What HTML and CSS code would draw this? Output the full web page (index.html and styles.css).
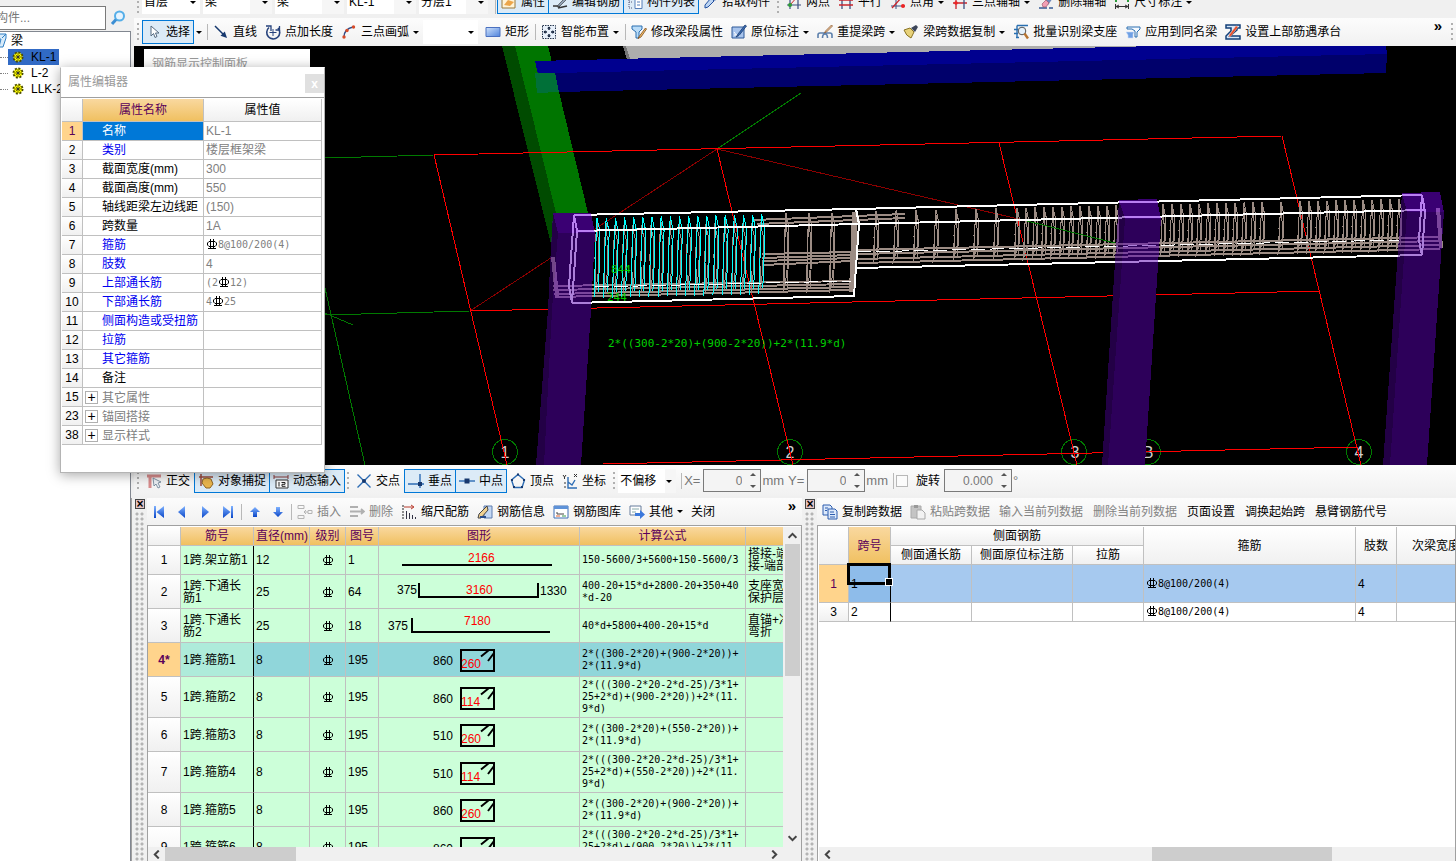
FILE: index.html
```html
<!DOCTYPE html>
<html lang="zh-CN">
<head>
    <meta charset="UTF-8">
    <meta name="viewport" content="width=device-width, initial-scale=1.0">
    <title>梁钢筋编辑</title>
    <link rel="stylesheet" href="styles.css">
</head>
<body>
    <!-- icon sprite -->
    <svg class="sprite" aria-hidden="true">
        <defs>
            <linearGradient id="blue" x1="0" y1="0" x2="1" y2="1"><stop offset="0" stop-color="#cfe2fb"/><stop offset="1" stop-color="#4f83dc"/></linearGradient>
            <linearGradient id="nav" x1="0" y1="0" x2="0" y2="1"><stop offset="0" stop-color="#7fb2ff"/><stop offset="1" stop-color="#0a46c8"/></linearGradient>
        </defs>
        <symbol id="i-search" viewBox="0 0 16 16"><circle cx="9.500" cy="6" r="4.500" fill="#e6f4ff" stroke="#55aee8" stroke-width="2"/><path d="M6 9.500 2 14" stroke="#3c8fd4" stroke-width="3"/></symbol>
        <symbol id="i-gear" viewBox="0 0 12 12"><circle cx="6" cy="6" r="4.500" fill="#ff0" stroke="#4a4a00" stroke-width="2" stroke-dasharray="2 1.500"/><circle cx="6" cy="6" r="3.500" fill="#ff0"/><path d="M6 2v8M2 6h8M3.500 3.500l5 5M8.500 3.500l-5 5" stroke="#555500" stroke-width=".8"/><circle cx="6" cy="6" r="1.300" fill="#333"/></symbol>
        <symbol id="i-beam" viewBox="0 0 16 16"><path d="M1 4 5 1h10v4l-3 9H8l2-8H1z" fill="#d8ebfa" stroke="#2f7fc4"/><path d="M11 5 15 1" stroke="#2f7fc4"/></symbol>
        <symbol id="i-cursor" viewBox="0 0 16 16"><path d="M5 2v10l2.500-2.500L9 13.500l2-1L9.500 9H13z" fill="#fff" stroke="#556a80"/></symbol>
        <symbol id="i-line" viewBox="0 0 16 16"><path d="M2 2 12 12" stroke="#16386e" stroke-width="1.500"/><path d="M14 14 7.500 11.800 11.800 7.500z" fill="#16386e"/></symbol>
        <symbol id="i-arclen" viewBox="0 0 16 16"><path d="M4 3.500A6.500 6.500 0 1 0 13 4" fill="none" stroke="#26427c" stroke-width="1.600"/><path d="M1 2h5v5M14.500 2v4h-4" fill="none" stroke="#26427c" stroke-width="1.300"/><path d="M8 5v7M4.500 8.500h7" stroke="#26427c"/></symbol>
        <symbol id="i-arc" viewBox="0 0 16 16"><path d="M3 13Q3 5 12 3" fill="none" stroke="#334d86" stroke-width="1.400"/><circle cx="3" cy="13" r="1.700" fill="#d64b2a"/><circle cx="6" cy="6.500" r="1.700" fill="#d64b2a"/><circle cx="12.500" cy="3" r="1.700" fill="#d64b2a"/></symbol>
        <symbol id="i-rect" viewBox="0 0 16 16"><path d="M1 3.500h14v9H1z" fill="url(#blue)" stroke="#4a70c0"/></symbol>
        <symbol id="i-smart" viewBox="0 0 16 16"><path d="M1.500 1.500h13v13h-13z" fill="#e8f0fa" stroke="#26364e" stroke-dasharray="1.500 1"/><path d="M8 3v3M8 10v3M3 8h3M10 8h3" stroke="#14233c" stroke-width="1.500"/><path d="M6 4.500h4L8 2.500zM6 11.500h4l-2 2zM4.500 6v4l-2-2zM11.500 6v4l2-2z" fill="#14233c"/></symbol>
        <symbol id="i-edit" viewBox="0 0 16 16"><path d="M1 2h10v3l-3 3v6H5V8L1 5z" fill="#b9dcf8" stroke="#2a6fb0"/><path d="m14.500 4-6 8-1.500 2.500L10 13l5.500-8z" fill="#f5c26a" stroke="#7a4818" stroke-width=".8"/></symbol>
        <symbol id="i-mark" viewBox="0 0 16 16"><path d="M1 3h12v11H1z" fill="#a8c4ec" stroke="#2c5898"/><path d="M3 8l3 4 3-4M3 11h6" stroke="#fff" fill="none"/><path d="M14 1 7 10 5 13l3-1.500L15.500 2z" fill="#3a6cb4" stroke="#1c3c70" stroke-width=".8"/></symbol>
        <symbol id="i-span" viewBox="0 0 16 16"><path d="M1 14v-3q0-2 2-2h10q2 0 2 2v3M5.500 14q0-4 2.500-4t2.500 4" fill="none" stroke="#5d80ac" stroke-width="1.600"/><path d="m14.500 1-6 6-1 2 2-1 6-6z" fill="#f0c9a0" stroke="#8a5a34" stroke-width=".8"/></symbol>
        <symbol id="i-brush" viewBox="0 0 16 16"><path d="M1 6 7 4l4 4-3 6Q3 12 1 6z" fill="#e8d27a" stroke="#8a7424"/><path d="M8 4 13 1l2 2-3 5z" fill="#3d465a"/></symbol>
        <symbol id="i-find" viewBox="0 0 16 16"><path d="M4 1.500h11M4 1.500V5M1 5.500h4M1 9.500h4M3 13.500h3M4 5v9" stroke="#2a6fb0" stroke-width="1.400"/><circle cx="9" cy="7" r="3.800" fill="#e5f2fc" stroke="#555"/><path d="m11.500 9.500 3.500 5" stroke="#b87430" stroke-width="2.400"/></symbol>
        <symbol id="i-apply" viewBox="0 0 16 16"><path d="M2 3h13v2l-3 3v5h-2V7L7 5H2z" fill="#f4f9ff" stroke="#2a6fb0"/><path d="M1 8h8l-1 2v4H3v-3z" fill="#6fa0e4" stroke="#c9dcf8" stroke-width=".6"/></symbol>
        <symbol id="i-set" viewBox="0 0 16 16"><path d="M1 1h14v3h-3v2L5 12h10v3H1v-3l5-5V4H1z" fill="#d7e8fa" stroke="#133f78" stroke-width="1.500"/><path d="M13 3 6 12l-2 1 .5-2.500L11 2z" fill="#e84c28" stroke="#f6b49c" stroke-width=".5"/></symbol>
        <symbol id="i-card" viewBox="0 0 16 16"><path d="M1 3h13v11H1z" fill="#fff4d8" stroke="#9a7a3c"/><path d="m3 11 4-5 6 2-4 4z" fill="#eca64a"/></symbol>
        <symbol id="i-bars" viewBox="0 0 16 16"><path d="M1 12h7M6 14l9-2" stroke="#333" stroke-width="1.600"/><path d="m14 3-7 7-2 3 3-1 7-7z" fill="#90a0b4" stroke="#333" stroke-width=".6"/></symbol>
        <symbol id="i-list" viewBox="0 0 16 16"><path d="M2 2v12h4M2 8h4" fill="none" stroke="#557" stroke-dasharray="1 1"/><path d="M8 1.500h7v13H8z" fill="#fff" stroke="#557fb8"/><path d="M10 5h3M10 8h3M10 11h3" stroke="#557fb8"/></symbol>
        <symbol id="i-pick" viewBox="0 0 16 16"><path d="M3 14v-3l6-7 3 3-6 6z" fill="#bcd4f2" stroke="#2350a0"/><path d="m9 3 4 4 2-4-2-2z" fill="#2350a0"/></symbol>
        <symbol id="i-axis" viewBox="0 0 16 16"><path d="M4 1v14M12 3v12M1 11h14" stroke="#3b4f80" stroke-width="1.200"/><path d="M4 11 12 2" stroke="#c22"/><circle cx="4" cy="11" r="2" fill="#2d9b36"/></symbol>
        <symbol id="i-parallel" viewBox="0 0 16 16"><path d="M4 3v12M12 3v12" stroke="#3b4f80" stroke-width="1.300"/><path d="M1 6h14M1 11h14" stroke="#c8242c" stroke-width="1.300"/></symbol>
        <symbol id="i-three" viewBox="0 0 16 16"><path d="M4 5v10M1 9h14" stroke="#c8242c" stroke-width="1.300"/><path d="M12 3v12" stroke="#3b4f80" stroke-width="1.300"/><circle cx="4" cy="9" r="1.800" fill="#e22"/></symbol>
        <symbol id="i-angle" viewBox="0 0 16 16"><path d="M6 2v13M1 12h14" stroke="#3b4f80"/><path d="M2 14 12 3" stroke="#c8242c" stroke-width="1.300"/><circle cx="13" cy="12" r="2" fill="#e22"/></symbol>
        <symbol id="i-eraser" viewBox="0 0 16 16"><path d="M1 14h8M11 14h4" stroke="#345a94" stroke-width="1.600"/><path d="m6 9 6-7 3 2-5 7z" fill="#6d86b8"/><path d="m4 10 4-4 3 3-3 4H5z" fill="#f1a0b4" stroke="#94485c" stroke-width=".6"/></symbol>
        <symbol id="i-dim" viewBox="0 0 16 16"><path d="M2 4v4M14 4v4" stroke="#2a9b3a" stroke-width="2"/><path d="M1.500 10v5M14.500 10v5M2 12.500h12M5 11l-3 1.500L5 14M11 11l3 1.500-3 1.500" stroke="#333" fill="none"/></symbol>
        <symbol id="i-ortho" viewBox="0 0 16 16"><path d="M1 3h14M4 3v12" stroke="#d88c8c" stroke-width="3"/><path d="m7 5 8 4-3 1 2 4-2 1-2-4-2 2z" fill="#eef2f6" stroke="#667c92" stroke-width=".8"/></symbol>
        <symbol id="i-snap" viewBox="0 0 16 16"><path d="M1 4h14M3 1v12" stroke="#9c4a3c" stroke-width="1.500"/><path d="M5 6q4-2 8 0l2 5-3 4H8L4 10z" fill="#e9b54c" stroke="#8c6424"/></symbol>
        <symbol id="i-input" viewBox="0 0 16 16"><path d="M1 4h14M1 2v4M15 2v4" stroke="#8c3c3c"/><path d="M3 7h12v8H3z" fill="#fff" stroke="#333"/><path d="M6 9v4.500M8.500 9.500H12v1.800H9v2h3.500" stroke="#222" fill="none"/></symbol>
        <symbol id="i-cross" viewBox="0 0 16 16"><path d="m1.500 1.500 13 13M14.500 1.500l-13 13" stroke="#2c6cb4" stroke-width="1.400"/><circle cx="8" cy="8" r="2" fill="#16386e"/></symbol>
        <symbol id="i-perp" viewBox="0 0 16 16"><path d="M12 1v14M0 11h16" stroke="#2c6cb4" stroke-width="1.400"/><path d="M10 9h4v4h-4z" fill="#16386e"/></symbol>
        <symbol id="i-mid" viewBox="0 0 16 16"><path d="M0 8h16" stroke="#2c6cb4" stroke-width="1.400"/><path d="M5.500 5.500h5v5h-5z" fill="#16386e"/></symbol>
        <symbol id="i-vertex" viewBox="0 0 16 16"><path d="M8 1.500 14.500 7 12 14.500H4L1.500 7z" fill="none" stroke="#2c6cb4" stroke-width="1.400"/><path d="M7 .5h2v2H7zM13 6h2v2h-2zM11 13h2v2h-2zM3 13h2v2H3zM1 6h2v2H1z" fill="#16386e"/></symbol>
        <symbol id="i-coord" viewBox="0 0 16 16"><path d="M6 4v11h9M6 9l4 3 3-5" fill="none" stroke="#2c6cb4" stroke-width="1.400"/><path d="m12 1 3 3M15 1l-3 3M1 2l1.500 2L4 2M2.500 4v2M2 10h2M2 14h2" stroke="#333" fill="none"/></symbol>
        <symbol id="i-first" viewBox="0 0 12 12"><path d="M1 0h2v12H1zM11 0v12L3.500 6z" fill="url(#nav)"/></symbol>
        <symbol id="i-prev" viewBox="0 0 12 12"><path d="M9 0v12L2 6z" fill="url(#nav)"/></symbol>
        <symbol id="i-next" viewBox="0 0 12 12"><path d="M3 0v12l7-6z" fill="url(#nav)"/></symbol>
        <symbol id="i-last" viewBox="0 0 12 12"><path d="M9 0h2v12H9zM1 0v12l7.500-6z" fill="url(#nav)"/></symbol>
        <symbol id="i-up" viewBox="0 0 12 12"><path d="m6 1 5 5H8v5H4V6H1z" fill="url(#nav)"/></symbol>
        <symbol id="i-down" viewBox="0 0 12 12"><path d="m6 11 5-5H8V1H4v5H1z" fill="url(#nav)"/></symbol>
        <symbol id="i-insert" viewBox="0 0 16 16"><path d="M1 1.500h6v3H1zM1 11.500h6v3H1zM11 6.500h4v3h-4zM7 8h4M9 6 7 8l2 2" fill="none" stroke="#b4b4b4"/></symbol>
        <symbol id="i-remove" viewBox="0 0 16 16"><path d="M1 3h8M1 7.500h14M12 5l3 2.500-3 2.500M1 12h8" fill="none" stroke="#b0b0b0" stroke-width="1.800"/></symbol>
        <symbol id="i-scale" viewBox="0 0 16 16"><path d="M2 1v14" stroke="#222" stroke-dasharray="2 1"/><path d="M3 3h9M10 1l3 2-3 2" stroke="#b83a2c" fill="none"/><path d="M5.500 7v8M8.500 9v6M11.500 11v4M14.500 13v2" stroke="#334"/></symbol>
        <symbol id="i-info" viewBox="0 0 16 16"><path d="M7 2h8v12H7z" fill="#c4d8f4" stroke="#5c7cb0"/><path d="m10 2-8 8-1 4h3l7-8z" fill="#f0d090" stroke="#444"/><path d="M3 13h6" stroke="#2a4c8c" stroke-width="2"/></symbol>
        <symbol id="i-lib" viewBox="0 0 16 16"><path d="M1 2h14v12H1z" fill="#fff" stroke="#3f6fb4"/><path d="M1 2h14v3H1z" fill="#5e92d8"/><path d="M4 8v2h7" fill="none" stroke="#444"/><path d="M3 12h4" stroke="#e0602c"/><path d="M9 12h4" stroke="#3a9b4a"/></symbol>
        <symbol id="i-other" viewBox="0 0 16 16"><path d="M1 2h11v9H1z" fill="#fff" stroke="#667c9c"/><path d="M3 5h7M3 8h4" stroke="#8aa"/><path d="M6 9h5V6l5 4.500-5 4.500v-3H6z" fill="#3b78dc"/></symbol>
        <symbol id="i-copy" viewBox="0 0 16 16"><path d="M1 1h7l2 2v8H1z" fill="#dce9fb" stroke="#2c5cae"/><path d="M6 5h7l2 2v8H6z" fill="#dce9fb" stroke="#2c5cae"/><path d="M8 8h4M8 10.500h5M8 13h5M3 4h3M3 6.500h2" stroke="#2c5cae"/></symbol>
        <symbol id="i-paste" viewBox="0 0 16 16"><path d="M1 2h10v12H1z" fill="#c4c4c4" stroke="#aaa"/><path d="M4 1h4v3H4z" fill="#999"/><path d="M7 6h5l3 3v6H7z" fill="#f2f2f2" stroke="#a8a8a8"/></symbol>
        <!-- HRB400 bar grade mark -->
        <symbol id="grade" viewBox="0 0 10 10"><path d="M3.500 0v9M6.500 0v9M1 9.500h8" stroke="currentColor" fill="none"/><path d="M2 2.500h6L9.500 4v2L8 7.500H2L.5 6V4z" stroke="currentColor" fill="none"/></symbol>
        <symbol id="hoop" viewBox="0 0 36 24"><path d="M1 1h33v21H1zM21 7.500 29 1M28 12l6-8" fill="none" stroke="#000" stroke-width="2"/></symbol>
        <symbol id="chev-l" viewBox="0 0 8 8"><path d="M6 .5 2.500 4 6 7.500" fill="none" stroke="#444" stroke-width="1.800"/></symbol>
        <symbol id="chev-r" viewBox="0 0 8 8"><path d="M2 .5 5.500 4 2 7.500" fill="none" stroke="#444" stroke-width="1.800"/></symbol>
        <symbol id="chev-u" viewBox="0 0 8 8"><path d="M.5 6 4 2.500 7.500 6" fill="none" stroke="#444" stroke-width="1.800"/></symbol>
        <symbol id="chev-d" viewBox="0 0 8 8"><path d="M.5 2 4 5.500 7.500 2" fill="none" stroke="#444" stroke-width="1.800"/></symbol>
    </svg>

    <div class="app">
        <aside class="sidebar">
            <div class="search">
                <input type="text" placeholder="搜索构件..." aria-label="搜索构件">
                <button aria-label="搜索"><svg class="icon"><use href="#i-search"/></svg></button>
            </div>
            <ul class="tree">
                <li class="root"><svg class="icon"><use href="#i-beam"/></svg>梁</li>
                <li><a href="#kl1" class="selected"><svg class="gear"><use href="#i-gear"/></svg>KL-1</a></li>
                <li><a href="#l2"><svg class="gear"><use href="#i-gear"/></svg>L-2</a></li>
                <li><a href="#llk2"><svg class="gear"><use href="#i-gear"/></svg>LLK-2</a></li>
            </ul>
        </aside>

        <main class="main">
            <div class="toolbar toolbar-top">
                <span class="grip"></span>
                <span class="combo floor"><select aria-label="楼层"><option>首层</option></select></span>
                <span class="combo"><select aria-label="构件类型"><option>梁</option></select></span>
                <span class="combo"><select aria-label="构件"><option>梁</option></select></span>
                <span class="combo"><select aria-label="构件名称"><option>KL-1</option></select></span>
                <span class="combo"><select aria-label="分层"><option>分层1</option></select></span>
                <span class="sep"></span>
                <button class="tool on"><svg class="icon"><use href="#i-card"/></svg>属性</button>
                <button class="tool on"><svg class="icon"><use href="#i-bars"/></svg>编辑钢筋</button>
                <button class="tool on"><svg class="icon"><use href="#i-list"/></svg>构件列表</button>
                <button class="tool"><svg class="icon"><use href="#i-pick"/></svg>拾取构件</button>
                <span class="grip"></span>
                <button class="tool"><svg class="icon"><use href="#i-axis"/></svg>两点</button>
                <button class="tool"><svg class="icon"><use href="#i-parallel"/></svg>平行</button>
                <button class="tool"><svg class="icon"><use href="#i-angle"/></svg>点角<i class="caret"></i></button>
                <button class="tool"><svg class="icon"><use href="#i-three"/></svg>三点辅轴<i class="caret"></i></button>
                <button class="tool"><svg class="icon"><use href="#i-eraser"/></svg>删除辅轴</button>
                <button class="tool"><svg class="icon"><use href="#i-dim"/></svg>尺寸标注<i class="caret"></i></button>
            </div>

            <div class="toolbar toolbar-draw">
                <span class="grip"></span>
                <button class="tool on"><svg class="icon"><use href="#i-cursor"/></svg>选择</button>
                <button class="tool drop" aria-label="选择方式"><i class="caret"></i></button>
                <span class="sep"></span>
                <button class="tool"><svg class="icon"><use href="#i-line"/></svg>直线</button>
                <button class="tool"><svg class="icon"><use href="#i-arclen"/></svg>点加长度</button>
                <button class="tool"><svg class="icon"><use href="#i-arc"/></svg>三点画弧<i class="caret"></i></button>
                <span class="combo blank"><select aria-label="画弧方式"><option></option></select></span>
                <button class="tool"><svg class="icon"><use href="#i-rect"/></svg>矩形</button>
                <span class="sep"></span>
                <button class="tool"><svg class="icon"><use href="#i-smart"/></svg>智能布置<i class="caret"></i></button>
                <span class="sep"></span>
                <button class="tool"><svg class="icon"><use href="#i-edit"/></svg>修改梁段属性</button>
                <button class="tool"><svg class="icon"><use href="#i-mark"/></svg>原位标注<i class="caret"></i></button>
                <button class="tool"><svg class="icon"><use href="#i-span"/></svg>重提梁跨<i class="caret"></i></button>
                <button class="tool"><svg class="icon"><use href="#i-brush"/></svg>梁跨数据复制<i class="caret"></i></button>
                <button class="tool"><svg class="icon"><use href="#i-find"/></svg>批量识别梁支座</button>
                <button class="tool"><svg class="icon"><use href="#i-apply"/></svg>应用到同名梁</button>
                <button class="tool"><svg class="icon"><use href="#i-set"/></svg>设置上部筋遇承台</button>
                <button class="more" aria-label="更多">»</button>
                <span class="grip"></span>
            </div>

            <div class="viewport">
                <svg id="scene" viewBox="134 46 1322 419" preserveAspectRatio="xMidYMid slice">
                    <!-- green beam at the back and the blue beam -->
                    <polygon points="502,46 515,46 556,213 553,252" fill="#004b00"/>
                    <polygon points="515,46 548,46 588,213 556,213" fill="#007500"/>
                    <polygon points="623,46 626,46 630,59 627,60" fill="#777"/>
                    <polygon points="626,46 1157,46 630,59" fill="#adadad"/>
                    <polygon points="535,61 1157,46 1386,46 1387,54 555,73 538,74" fill="#00008f"/>
                    <polygon points="555,73 1387,54 1386,73 558,92" fill="#00006b"/>
                    <polygon points="535,73 555,73 559,92 537,93" fill="#007038"/>
                    <!-- axis grid -->
                    <path d="M801 93 717 149M325 158 434 155M325 315 470 311M325 313l28 12M325 288l40 177" stroke="#007a00" fill="none"/>
                    <path d="M717 149 470 311M717 149 1023 220" stroke="#8c0000" fill="none"/>
                    <g class="axis-marks">
                        <circle cx="505" cy="452" r="12.500"/><circle cx="790" cy="452" r="12.500"/>
                        <circle cx="1074" cy="452" r="12.500"/><circle cx="1148" cy="452" r="12.500"/><circle cx="1359" cy="452" r="12.500"/>
                        <text x="505" y="458">1</text><text x="790" y="458">2</text><text x="1075" y="458">3</text>
                        <text x="1148" y="458">B</text><text x="1359" y="458">4</text>
                    </g>
                    <g stroke="#f00" fill="none">
                        <path d="M434 155 1282 136M470 311 1320 291M603 464 1359 447"/>
                        <path d="M434 155 507 465M717 149 793 465M999 143 1077 465M1282 136 1361 465"/>
                    </g>
                    <g fill="#000">
                        <polygon points="553,213 591,213 595,233 591,310 581,465 536,465 548,310"/>
                        <polygon points="1119,200 1157,199 1161,220 1145,465 1102,465"/>
                        <polygon points="1402,193 1440,192 1444,212 1427,465 1383,465"/>
                    </g>
                    <g stroke="#9c8c84" stroke-width="2" fill="none">
                        <path d="M553 286 852 281M553 290 852 284M554 294 852 287M555 297 852 290"/>
                        <path d="M762 254 852 252M762 258 852 255M763 261 852 258M763 265 852 261"/>
                        <path d="M857 250 1440 237M857 254 1440 241M858 259 1440 245M858 263 1440 249"/>
                        <path d="M754 220 905 214M757 224 905 218"/>
                        <path d="M553 257 557 296M1438 208 1441 248" stroke-width="4"/>
                        <path d="M855 212 852 292" stroke-width="6"/>
                    </g>
                    <g id="stirrups" fill="none"></g>
                    <path d="M1023 220 1115 243" stroke="#007a00"/>
                    <g stroke="#fff" stroke-width="2" fill="none">
                        <path d="M574 215 856 209 1422 195M577 231 859 224 1425 210"/>
                        <path d="M572 303 854 296 859 224 856 209M857 268 1422 255"/>
                        <path d="M574 215 569 286 572 303 577 231zM1422 195 1419 240 1422 255 1425 212z"/>
                        <path d="M595 287 852 281M857 252 1400 240" stroke-width="1" stroke-dasharray="14 5"/>
                    </g>
                    <!-- columns -->
                    <g fill="#5a00b4" fill-opacity=".5">
                        <polygon points="558,233 595,233 591,310 581,465 544,465 552,310"/>
                        <polygon points="1125,219 1161,219 1145,465 1108,465"/>
                        <polygon points="1407,212 1444,212 1427,465 1390,465"/>
                    </g>
                    <g fill="#46008c" fill-opacity=".5">
                        <polygon points="553,213 558,233 552,310 544,465 536,465 548,310 551,245"/>
                        <polygon points="1119,200 1125,219 1108,465 1102,465"/>
                        <polygon points="1402,193 1407,212 1390,465 1383,465"/>
                    </g>
                    <g fill="#7400e6" fill-opacity=".5">
                        <polygon points="553,213 591,213 595,233 558,233"/>
                        <polygon points="1119,200 1157,199 1161,219 1125,219"/>
                        <polygon points="1402,193 1440,192 1444,212 1407,212"/>
                    </g>
                    <g class="scene-text">
                        <text x="611" y="273">844</text>
                        <text x="607" y="301">244</text>
                        <text x="608" y="347">2*((300-2*20)+(900-2*20))+2*(11.9*d)</text>
                    </g>
                </svg>
                <div class="float-panel">钢筋显示控制面板</div>
            </div>

            <div class="toolbar toolbar-snap">
                <span class="grip"></span>
                <button class="tool"><svg class="icon"><use href="#i-ortho"/></svg>正交</button>
                <button class="tool on"><svg class="icon"><use href="#i-snap"/></svg>对象捕捉</button>
                <button class="tool on"><svg class="icon"><use href="#i-input"/></svg>动态输入</button>
                <span class="grip"></span>
                <button class="tool"><svg class="icon"><use href="#i-cross"/></svg>交点</button>
                <button class="tool on"><svg class="icon"><use href="#i-perp"/></svg>垂点</button>
                <button class="tool on"><svg class="icon"><use href="#i-mid"/></svg>中点</button>
                <button class="tool"><svg class="icon"><use href="#i-vertex"/></svg>顶点</button>
                <button class="tool"><svg class="icon"><use href="#i-coord"/></svg>坐标</button>
                <span class="grip"></span>
                <span class="combo offset"><select aria-label="偏移方式"><option>不偏移</option></select></span>
                <span class="sep"></span>
                <label for="offX">X=</label>
                <span class="spin"><input type="text" id="offX" value="0"></span><span class="unit">mm</span>
                <label for="offY">Y=</label>
                <span class="spin"><input type="text" id="offY" value="0"></span><span class="unit">mm</span>
                <span class="sep"></span>
                <input type="checkbox" id="rotate">
                <label for="rotate" class="rotate">旋转</label>
                <span class="spin wide"><input type="text" value="0.000" aria-label="旋转角度"></span><span class="unit">°</span>
            </div>

            <div class="docks">
                <section class="dock dock-bars">
                    <div class="dock-handle"><button aria-label="关闭面板">×</button></div>
                    <div class="dock-body">
                        <div class="toolbar toolbar-dock">
                            <button class="nav" aria-label="首行"><svg><use href="#i-first"/></svg></button>
                            <button class="nav" aria-label="上一行"><svg><use href="#i-prev"/></svg></button>
                            <button class="nav" aria-label="下一行"><svg><use href="#i-next"/></svg></button>
                            <button class="nav" aria-label="末行"><svg><use href="#i-last"/></svg></button>
                            <span class="sep"></span>
                            <button class="nav" aria-label="上移"><svg><use href="#i-up"/></svg></button>
                            <button class="nav" aria-label="下移"><svg><use href="#i-down"/></svg></button>
                            <span class="sep"></span>
                            <button class="tool" disabled><svg class="icon"><use href="#i-insert"/></svg>插入</button>
                            <button class="tool" disabled><svg class="icon"><use href="#i-remove"/></svg>删除</button>
                            <button class="tool"><svg class="icon"><use href="#i-scale"/></svg>缩尺配筋</button>
                            <button class="tool"><svg class="icon"><use href="#i-info"/></svg>钢筋信息</button>
                            <button class="tool"><svg class="icon"><use href="#i-lib"/></svg>钢筋图库</button>
                            <button class="tool"><svg class="icon"><use href="#i-other"/></svg>其他<i class="caret"></i></button>
                            <button class="tool">关闭</button>
                            <button class="more" aria-label="更多">»</button>
                        </div>
                        <div class="grid-frame">
                            <div class="grid-view">
                                <table class="grid bars">
                                    <colgroup><col class="c-no"><col class="c-name"><col class="c-dia"><col class="c-grade"><col class="c-fig"><col class="c-shape"><col class="c-formula"><col class="c-note"></colgroup>
                                    <thead>
                                        <tr><th></th><th>筋号</th><th>直径(mm)</th><th>级别</th><th>图号</th><th>图形</th><th>计算公式</th><th></th></tr>
                                    </thead>
                                    <tbody>
                                        <tr class="short"><th>1</th><td>1跨.架立筋1</td><td>12</td><td class="mid"><svg class="grade"><use href="#grade"/></svg></td><td>1</td>
                                            <td class="shape"><svg viewBox="0 0 200 28" height="28"><path d="M23 19h150"/><text class="red" x="89" y="16">2166</text></svg></td>
                                            <td class="formula">150-5600/3+5600+150-5600/3</td><td>搭接-端部<br>接-端部构</td></tr>
                                        <tr><th>2</th><td>1跨.下通长<br>筋1</td><td>25</td><td class="mid"><svg class="grade"><use href="#grade"/></svg></td><td>64</td>
                                            <td class="shape"><svg viewBox="0 0 200 33" height="33"><path d="M40 8v14h119V8"/><text x="18" y="19">375</text><text class="red" x="87" y="19">3160</text><text x="161" y="20">1330</text></svg></td>
                                            <td class="formula">400-20+15*d+2800-20+350+40<br>*d-20</td><td>支座宽-保<br>保护层厚</td></tr>
                                        <tr><th>3</th><td>1跨.下通长<br>筋2</td><td>25</td><td class="mid"><svg class="grade"><use href="#grade"/></svg></td><td>18</td>
                                            <td class="shape"><svg viewBox="0 0 200 33" height="33"><path d="M33 9v14h138"/><text x="9" y="21">375</text><text class="red" x="85" y="16">7180</text></svg></td>
                                            <td class="formula">40*d+5800+400-20+15*d</td><td>直锚+净长<br>弯折</td></tr>
                                        <tr class="current"><th>4*</th><td>1跨.箍筋1</td><td>8</td><td class="mid"><svg class="grade"><use href="#grade"/></svg></td><td>195</td>
                                            <td class="shape"><svg viewBox="0 0 200 33" height="33"><text x="54" y="22">860</text><use href="#hoop" x="81" y="6" width="36" height="24"/><text class="red" x="82" y="25">260</text></svg></td>
                                            <td class="formula">2*((300-2*20)+(900-2*20))+<br>2*(11.9*d)</td><td></td></tr>
                                        <tr class="tall"><th>5</th><td>1跨.箍筋2</td><td>8</td><td class="mid"><svg class="grade"><use href="#grade"/></svg></td><td>195</td>
                                            <td class="shape"><svg viewBox="0 0 200 33" height="33"><text x="54" y="22">860</text><use href="#hoop" x="81" y="6" width="36" height="24"/><text class="red" x="82" y="25">114</text></svg></td>
                                            <td class="formula">2*(((300-2*20-2*d-25)/3*1+<br>25+2*d)+(900-2*20))+2*(11.<br>9*d)</td><td></td></tr>
                                        <tr><th>6</th><td>1跨.箍筋3</td><td>8</td><td class="mid"><svg class="grade"><use href="#grade"/></svg></td><td>195</td>
                                            <td class="shape"><svg viewBox="0 0 200 33" height="33"><text x="54" y="22">510</text><use href="#hoop" x="81" y="6" width="36" height="24"/><text class="red" x="82" y="25">260</text></svg></td>
                                            <td class="formula">2*((300-2*20)+(550-2*20))+<br>2*(11.9*d)</td><td></td></tr>
                                        <tr class="tall"><th>7</th><td>1跨.箍筋4</td><td>8</td><td class="mid"><svg class="grade"><use href="#grade"/></svg></td><td>195</td>
                                            <td class="shape"><svg viewBox="0 0 200 33" height="33"><text x="54" y="22">510</text><use href="#hoop" x="81" y="6" width="36" height="24"/><text class="red" x="82" y="25">114</text></svg></td>
                                            <td class="formula">2*(((300-2*20-2*d-25)/3*1+<br>25+2*d)+(550-2*20))+2*(11.<br>9*d)</td><td></td></tr>
                                        <tr><th>8</th><td>1跨.箍筋5</td><td>8</td><td class="mid"><svg class="grade"><use href="#grade"/></svg></td><td>195</td>
                                            <td class="shape"><svg viewBox="0 0 200 33" height="33"><text x="54" y="22">860</text><use href="#hoop" x="81" y="6" width="36" height="24"/><text class="red" x="82" y="25">260</text></svg></td>
                                            <td class="formula">2*((300-2*20)+(900-2*20))+<br>2*(11.9*d)</td><td></td></tr>
                                        <tr class="tall"><th>9</th><td>1跨.箍筋6</td><td>8</td><td class="mid"><svg class="grade"><use href="#grade"/></svg></td><td>195</td>
                                            <td class="shape"><svg viewBox="0 0 200 33" height="33"><text x="54" y="22">860</text><use href="#hoop" x="81" y="6" width="36" height="24"/><text class="red" x="82" y="25">114</text></svg></td>
                                            <td class="formula">2*(((300-2*20-2*d-25)/3*1+<br>25+2*d)+(900-2*20))+2*(11.<br>9*d)</td><td></td></tr>
                                    </tbody>
                                </table>
                            </div>
                            <div class="scroll-v">
                                <svg><use href="#chev-u"/></svg>
                                <div class="track"><div class="thumb"></div></div>
                                <svg><use href="#chev-d"/></svg>
                            </div>
                            <div class="scroll-h">
                                <svg><use href="#chev-l"/></svg>
                                <div class="track"><div class="thumb"></div></div>
                                <svg><use href="#chev-r"/></svg>
                            </div>
                        </div>
                    </div>
                </section>

                <section class="dock dock-spans">
                    <div class="dock-handle"><button aria-label="关闭面板">×</button></div>
                    <div class="dock-body">
                        <div class="toolbar toolbar-dock">
                            <button class="tool"><svg class="icon"><use href="#i-copy"/></svg>复制跨数据</button>
                            <button class="tool" disabled><svg class="icon"><use href="#i-paste"/></svg>粘贴跨数据</button>
                            <button class="tool plain" disabled>输入当前列数据</button>
                            <button class="tool plain" disabled>删除当前列数据</button>
                            <button class="tool plain">页面设置</button>
                            <button class="tool plain">调换起始跨</button>
                            <button class="tool plain">悬臂钢筋代号</button>
                        </div>
                        <div class="grid-frame">
                            <div class="grid-view">
                                <table class="grid spans">
                                    <colgroup><col class="s-no"><col class="s-span"><col class="s-through"><col class="s-mark"><col class="s-tie"><col class="s-hoop"><col class="s-legs"><col class="s-width"></colgroup>
                                    <thead>
                                        <tr><th rowspan="2"></th><th rowspan="2" class="hot">跨号</th><th colspan="3">侧面钢筋</th><th rowspan="2">箍筋</th><th rowspan="2">肢数</th><th rowspan="2">次梁宽度</th></tr>
                                        <tr><th>侧面通长筋</th><th>侧面原位标注筋</th><th>拉筋</th></tr>
                                    </thead>
                                    <tbody>
                                        <tr class="current"><th>1</th><td class="active"><div class="cursor"></div>1</td><td></td><td></td><td></td><td class="formula"><svg class="grade"><use href="#grade"/></svg>8@100/200(4)</td><td>4</td><td></td></tr>
                                        <tr><th>3</th><td>2</td><td></td><td></td><td></td><td class="formula"><svg class="grade"><use href="#grade"/></svg>8@100/200(4)</td><td>4</td><td></td></tr>
                                    </tbody>
                                </table>
                            </div>
                            <div class="scroll-h">
                                <svg><use href="#chev-l"/></svg>
                                <div class="track"><div class="thumb"></div></div>
                            </div>
                        </div>
                    </div>
                </section>
            </div>
        </main>
    </div>

    <div class="prop-window">
        <div class="prop-title"><span>属性编辑器</span><button aria-label="关闭">x</button></div>
        <div class="prop-body">
            <table class="grid props">
                <colgroup><col class="p-no"><col class="p-name"><col class="p-value"></colgroup>
                <thead><tr><th></th><th class="hot">属性名称</th><th>属性值</th></tr></thead>
                <tbody>
                    <tr class="current"><th>1</th><td>名称</td><td>KL-1</td></tr>
                    <tr><th>2</th><td class="key">类别</td><td>楼层框架梁</td></tr>
                    <tr><th>3</th><td>截面宽度(mm)</td><td>300</td></tr>
                    <tr><th>4</th><td>截面高度(mm)</td><td>550</td></tr>
                    <tr><th>5</th><td>轴线距梁左边线距</td><td>(150)</td></tr>
                    <tr><th>6</th><td>跨数量</td><td>1A</td></tr>
                    <tr><th>7</th><td class="key">箍筋</td><td class="formula"><svg class="grade"><use href="#grade"/></svg>8@100/200(4)</td></tr>
                    <tr><th>8</th><td class="key">肢数</td><td>4</td></tr>
                    <tr><th>9</th><td class="key">上部通长筋</td><td class="formula">(2<svg class="grade"><use href="#grade"/></svg>12)</td></tr>
                    <tr><th>10</th><td class="key">下部通长筋</td><td class="formula">4<svg class="grade"><use href="#grade"/></svg>25</td></tr>
                    <tr><th>11</th><td class="key">侧面构造或受扭筋</td><td></td></tr>
                    <tr><th>12</th><td class="key">拉筋</td><td></td></tr>
                    <tr><th>13</th><td class="key">其它箍筋</td><td></td></tr>
                    <tr><th>14</th><td>备注</td><td></td></tr>
                    <tr class="group"><th>15</th><td><button aria-label="展开">+</button>其它属性</td><td></td></tr>
                    <tr class="group"><th>23</th><td><button aria-label="展开">+</button>锚固搭接</td><td></td></tr>
                    <tr class="group"><th>38</th><td><button aria-label="展开">+</button>显示样式</td><td></td></tr>
                </tbody>
            </table>
        </div>
    </div>

    <script src="scene.js"></script>
</body>
</html>
```
FILE: styles.css
```css
* {
    box-sizing: border-box;
}
body {
    margin: 0;
    font-family: "Liberation Sans", "Noto Sans CJK SC", sans-serif;
    font-size: 12px;
    line-height: 16px;
    color: #000;
    background: #f0f0f0;
    overflow: hidden;
}
button, input, select {
    font: inherit;
    color: inherit;
    margin: 0;
    padding: 0;
}
button {
    border: none;
    background: none;
}
.sprite {
    position: absolute;
    width: 0;
    height: 0;
}
.icon {
    width: 16px;
    height: 16px;
    flex: none;
}
.app {
    display: flex;
    height: 100vh;
}

/* component list */
.sidebar {
    width: 131px;
    flex: none;
    display: flex;
    flex-direction: column;
    overflow: hidden;
}
.search {
    display: flex;
    height: 31px;
    padding-top: 6px;
}
.search input {
    width: 136px;
    height: 24px;
    margin-left: -30px;
    padding-left: 1px;
    border: 1px solid #7a7a7a;
    background: #fff;
}
.search input::placeholder {
    color: #777;
    opacity: 1;
}
.search button {
    flex: 1;
    height: 24px;
    padding-left: 4px;
    text-align: left;
}
.search svg {
    display: block;
}
.tree {
    flex: 1;
    margin: 0;
    padding: 1px 0 0;
    list-style: none;
    background: #fff;
    border-top: 1px solid #828790;
    border-right: 1px solid #828790;
}
.tree li {
    display: flex;
    align-items: center;
    height: 16px;
}
.tree .root {
    margin-left: -9px;
    gap: 4px;
}
.tree li:not(.root)::before {
    content: "";
    width: 8px;
    border-top: 1px dotted #808080;
}
.tree a {
    display: flex;
    align-items: center;
    gap: 7px;
    height: 16px;
    padding: 0 3px 0 4px;
    color: #000;
    text-decoration: none;
}
.tree a.selected {
    background: #316ac5;
}
.gear {
    width: 12px;
    height: 12px;
}

/* toolbars */
.main {
    flex: 1;
    min-width: 0;
    display: flex;
    flex-direction: column;
    padding-left: 3px;
}
.toolbar {
    display: flex;
    align-items: center;
    flex: none;
    white-space: nowrap;
    overflow: hidden;
}
.toolbar-top {
    height: 14px;
    margin-bottom: 4px;
    align-items: flex-end;
}
.toolbar-draw {
    height: 28px;
    background: linear-gradient(#fcfcfc, #f1f1f1);
}
.toolbar-snap {
    height: 31px;
    background: linear-gradient(#fcfcfc, #f1f1f1);
}
.toolbar-dock {
    height: 27px;
    background: linear-gradient(#fcfcfc, #f1f1f1);
}
.tool {
    display: flex;
    align-items: center;
    gap: 4px;
    height: 24px;
    padding: 0 4px;
    flex: none;
}
.tool.on {
    padding: 0 3px;
    margin-right: -1px;
    background: #dcebf7;
    border: 1px solid #0078d7;
}
.tool.plain {
    padding: 0 5px;
}
.tool:disabled {
    color: #838383;
}
.tool.drop {
    padding: 0 3px;
}
.caret {
    width: 6px;
    height: 3px;
    border: solid transparent;
    border-width: 3px 3px 0;
    border-top-color: #000;
}
.grip {
    width: 2px;
    height: 18px;
    margin: 0 3px;
    flex: none;
    background: repeating-linear-gradient(#b0b0b0 0 2px, transparent 2px 5px);
}
.sep {
    width: 1px;
    height: 16px;
    margin: 0 1px 0 2px;
    flex: none;
    background: #b8b8b8;
}
.toolbar-top .sep {
    margin-left: 4px;
}
.combo {
    position: relative;
    width: 69px;
    height: 24px;
    margin-right: 3px;
    flex: none;
    background: #fff;
}
.combo.floor {
    width: 58px;
}
.combo.blank {
    width: 55px;
}
.combo.offset {
    width: 58px;
}
.combo::after {
    content: "";
    position: absolute;
    right: 4px;
    top: 11px;
    border: solid transparent;
    border-width: 3px 3px 0;
    border-top-color: #000;
}
.combo select {
    width: 100%;
    height: 24px;
    padding-left: 2px;
    border: none;
    appearance: none;
    background: linear-gradient(90deg, transparent 47px, #f6f6f6 47px);
}
.combo.floor select, .combo.blank select {
    background: #fff;
}
.more {
    margin-left: auto;
    align-self: flex-start;
    padding: 0 6px;
    font-size: 15px;
    font-weight: bold;
}
.toolbar-snap label, .unit {
    color: #777;
    font-size: 13px;
}
.toolbar-snap label {
    margin: 0 3px 0 1px;
}
.toolbar-snap label.rotate {
    color: #000;
    font-size: 12px;
    margin: 0 4px 0 8px;
}
.toolbar-snap input[type="checkbox"] {
    appearance: none;
    width: 12px;
    height: 12px;
    margin-left: 1px;
    border: 1px solid #b8b8b8;
    background: #fbfbfb;
}
.unit {
    margin: 0 3px 0 1px;
}
.spin {
    position: relative;
    width: 58px;
    height: 23px;
    flex: none;
}
.spin.wide {
    width: 68px;
}
.spin input {
    width: 100%;
    height: 23px;
    padding-right: 18px;
    border: 1px solid #7a7a7a;
    background: #f4f4f4;
    color: #777;
    text-align: right;
}
.spin::before, .spin::after {
    content: "";
    position: absolute;
    right: 5px;
    border: 3px solid transparent;
}
.spin::before {
    top: 1px;
    border-bottom-color: #555;
}
.spin::after {
    bottom: 1px;
    border-top-color: #555;
}

/* 3D view */
.viewport {
    position: relative;
    flex: 1;
    min-height: 0;
    background: #000;
    overflow: hidden;
}
#scene {
    display: block;
    width: 100%;
    height: 100%;
    shape-rendering: crispEdges;
}
.axis-marks circle {
    fill: none;
    stroke: #007a00;
}
.axis-marks text {
    fill: #d0d0d0;
    font-size: 16px;
    text-anchor: middle;
}
.scene-text {
    fill: #00d000;
    font-family: "DejaVu Sans Mono", monospace;
    font-size: 11px;
}
.float-panel {
    position: absolute;
    left: 10px;
    top: 3px;
    width: 166px;
    height: 40px;
    padding: 7px 8px;
    background: #fff;
    color: #999;
}

/* docked panels */
.docks {
    display: flex;
    flex: 0 0 365px;
    padding-top: 2px;
    margin-left: -3px;
    overflow: hidden;
}
.dock {
    display: flex;
    min-width: 0;
}
.dock-bars {
    flex: 0 0 671px;
    border-left: 1px solid #a0a0a0;
}
.dock-spans {
    flex: 1;
}
.dock-handle {
    width: 15px;
    flex: none;
    padding: 1px 0 0 3px;
}
.dock-handle::after {
    content: "";
    display: block;
    width: 10px;
    height: 350px;
    margin-top: 3px;
    background: radial-gradient(circle at 2px 2px, #b4b4b4 1px, transparent 2px) 0 0 / 5px 5px;
}
.dock-handle button {
    display: block;
    width: 10px;
    height: 10px;
    border: 1px solid #444;
    background: #e4c4c4;
    font-size: 12px;
    font-weight: bold;
    line-height: 8px;
}
.dock-body {
    flex: 1;
    min-width: 0;
    display: flex;
    flex-direction: column;
}
.dock-spans .toolbar-dock {
    padding-left: 1px;
}
.nav {
    width: 23px;
    height: 24px;
    flex: none;
}
.nav svg {
    display: block;
    width: 12px;
    height: 12px;
    margin: 0 auto;
}
.grid-frame {
    flex: 1;
    min-height: 0;
    display: grid;
    grid-template-columns: minmax(0, 1fr) auto;
    grid-template-rows: minmax(0, 1fr) 14px;
    padding: 1px 0 0 1px;
    border: 1px solid #a0a0a0;
    border-bottom: none;
    background: #fff;
}
.dock-bars .grid-frame {
    padding-left: 0;
}
.grid-view {
    overflow: hidden;
}
.scroll-v {
    width: 18px;
    display: flex;
    flex-direction: column;
    align-items: center;
    background: #f0f0f0;
    padding: 4px 2px;
}
.scroll-v .track, .scroll-h .track {
    flex: 1;
}
.scroll-v .track {
    width: 15px;
    padding-top: 4px;
}
.scroll-v .thumb {
    height: 132px;
    background: #cdcdcd;
}
.scroll-h {
    grid-column: 1 / -1;
    display: flex;
    align-items: center;
    background: #f0f0f0;
    padding: 0 4px;
}
.scroll-h .track {
    height: 14px;
}
.scroll-h .thumb {
    height: 14px;
    width: 131px;
    background: #cdcdcd;
}
.dock-bars .scroll-h {
    padding-right: 22px;
}
.dock-bars .scroll-h .track {
    padding-left: 4px;
}
.dock-spans .scroll-h .thumb {
    width: 180px;
    margin-left: 320px;
}
.scroll-v > svg, .scroll-h > svg {
    width: 9px;
    height: 9px;
    flex: none;
}

/* grids */
.grid {
    table-layout: fixed;
    border-collapse: separate;
    border-spacing: 0;
    line-height: 12px;
}
.grid th, .grid td {
    padding: 0 2px;
    border-right: 1px solid #c0c0c0;
    border-bottom: 1px solid #c0c0c0;
    overflow: hidden;
    white-space: nowrap;
}
.grid td {
    text-align: left;
}
.grid th {
    font-weight: normal;
    background: linear-gradient(#fff, #f0f0f0);
}
.grid .hot, .bars thead th:not(:first-child) {
    background: linear-gradient(#f9d89f, #f0c060);
    color: #5a005a;
}
.grid .current th {
    background: #ffd48c;
    color: #5a005a;
}
.grid .formula {
    font-family: "DejaVu Sans Mono", monospace;
    font-size: 10px;
}
.grade {
    width: 10px;
    height: 10px;
    margin: 0 1px;
    vertical-align: -1px;
    color: #000;
}

.bars {
    width: 695px;
}
.c-no { width: 33px; }
.c-name { width: 73px; }
.c-dia { width: 56px; }
.c-grade { width: 36px; }
.c-fig { width: 33px; }
.c-shape { width: 201px; }
.c-formula { width: 166px; }
.c-note { width: 97px; }
.bars thead th {
    height: 19px;
}
.bars tbody tr {
    height: 34px;
}
.bars tbody tr.short {
    height: 29px;
}
.bars tbody tr.tall {
    height: 41px;
}
.bars td {
    background: #ccffd9;
}
.bars td:nth-child(2) {
    border-right-color: #000;
}
.bars .current th {
    font-weight: bold;
}
.bars .current td {
    background: #90d6da;
}
.bars .current td:nth-child(2) {
    background: #aeebda;
}
.bars .mid {
    text-align: center;
}
.bars .shape {
    padding: 0;
}
.shape svg {
    display: block;
    width: 200px;
}
.shape path {
    fill: none;
    stroke: #000;
    stroke-width: 2;
}
.shape .red {
    fill: #f00;
}

.spans {
    width: 657px;
}
.s-no { width: 30px; }
.s-span { width: 42px; }
.s-through { width: 81px; }
.s-mark { width: 101px; }
.s-tie { width: 71px; }
.s-hoop { width: 212px; }
.s-legs { width: 41px; }
.s-width { width: 79px; }
.spans thead th {
    height: 19px;
}
.spans tbody tr {
    height: 19px;
}
.spans tbody tr.current {
    height: 38px;
}
.spans td:nth-child(2) {
    border-right-color: #000;
}
.spans .current td {
    background: #a6c9ef;
}
.spans .current td.active {
    position: relative;
    background: #8ebcea;
    overflow: visible;
}
.cursor {
    position: absolute;
    left: -2px;
    top: -2px;
    width: 44px;
    height: 22px;
    border: 3px solid #000;
}
.cursor::after {
    content: "";
    position: absolute;
    right: -5px;
    bottom: -4px;
    width: 6px;
    height: 6px;
    border: 1px solid #fff;
    background: #000;
}

/* property editor */
.prop-window {
    position: absolute;
    left: 60px;
    top: 67px;
    width: 265px;
    height: 406px;
    display: flex;
    flex-direction: column;
    background: #fff;
    border: 1px solid #b4b4b4;
    border-top-color: #fff;
    box-shadow: 0 2px 12px rgba(0, 0, 0, 0.35);
}
.prop-title {
    display: flex;
    justify-content: space-between;
    height: 29px;
    padding: 6px 0 0 7px;
    color: #999;
}
.prop-title button {
    width: 19px;
    height: 19px;
    background: #e0e0e0;
    color: #fff;
    font-weight: bold;
}
.prop-body {
    flex: 1;
    padding: 1px 0 0 1px;
    border-top: 1px solid #a0a0a0;
}
.props {
    width: 260px;
}
.p-no { width: 21px; }
.p-name { width: 121px; }
.p-value { width: 118px; }
.props thead th {
    height: 23px;
}
.props tbody tr {
    height: 19px;
}
.props td:nth-child(2) {
    padding-left: 19px;
}
.props td:nth-child(3) {
    color: #808080;
}
.props .key {
    color: #0000f0;
}
.props .current td:nth-child(2) {
    background: #0078d7;
    color: #fff;
}
.props .group td:nth-child(2) {
    padding-left: 2px;
    color: #808080;
}
.props .group button {
    width: 13px;
    height: 13px;
    margin-right: 4px;
    border: 1px solid #b0b0b0;
    background: #fff;
    color: #000;
    font-size: 14px;
    line-height: 11px;
}
```
FILE: scene.js
```js
// draws the stirrups of the beam cage
const NS = 'http://www.w3.org/2000/svg';
const layer = document.getElementById('stirrups');
const STEEL = '#9c8c84';
const CYAN = '#00ffff';

function addPath(d, color) {
    const p = document.createElementNS(NS, 'path');
    p.setAttribute('d', d);
    p.setAttribute('stroke', color);
    layer.appendChild(p);
}

// front legs in the given colour, the hooks and rear legs always in steel
function stirrup(x, top, bottom, color) {
    const h = bottom - top;
    addPath(`M${x} ${top + 5} v10 l2 8 L${x + 1} ${bottom - h * 0.3} L${x - 1} ${bottom - 8}`, STEEL);
    addPath(`M${x - 1} ${top + 8} v8 L${x - 2} ${top + h * 0.5} L${x - 1} ${bottom - 4}`, STEEL);
    addPath(`M${x} ${top} l-1 ${h * 0.3} L${x - 3} ${bottom}`, color);
    addPath(`M${x} ${top} l3 14 L${x + 2} ${bottom - h * 0.3} L${x + 1} ${bottom - 6}`, color);
}

// dense zone of the first span, the selected bars
for (let i = 0; i < 19; i++) {
    const x = 597 + i * 9.15;
    stirrup(x, 218 - i * 0.2, 298 - i * 0.2, CYAN);
}

[786, 809, 832].forEach(x => stirrup(x, 213, 294, STEEL));

// second span onwards, slopes up to the right
function rear(x) {
    const top = 211 - (x - 876) * 0.023;
    stirrup(x, top, top + 53, STEEL);
}

[876, 896, 916, 936, 956, 976, 996].forEach(rear);
for (let x = 1017; x < 1120; x += 9) rear(x);
for (let x = 1163; x < 1265; x += 9) rear(x);
rear(1281);
for (let x = 1300; x < 1402; x += 9) rear(x);
```
